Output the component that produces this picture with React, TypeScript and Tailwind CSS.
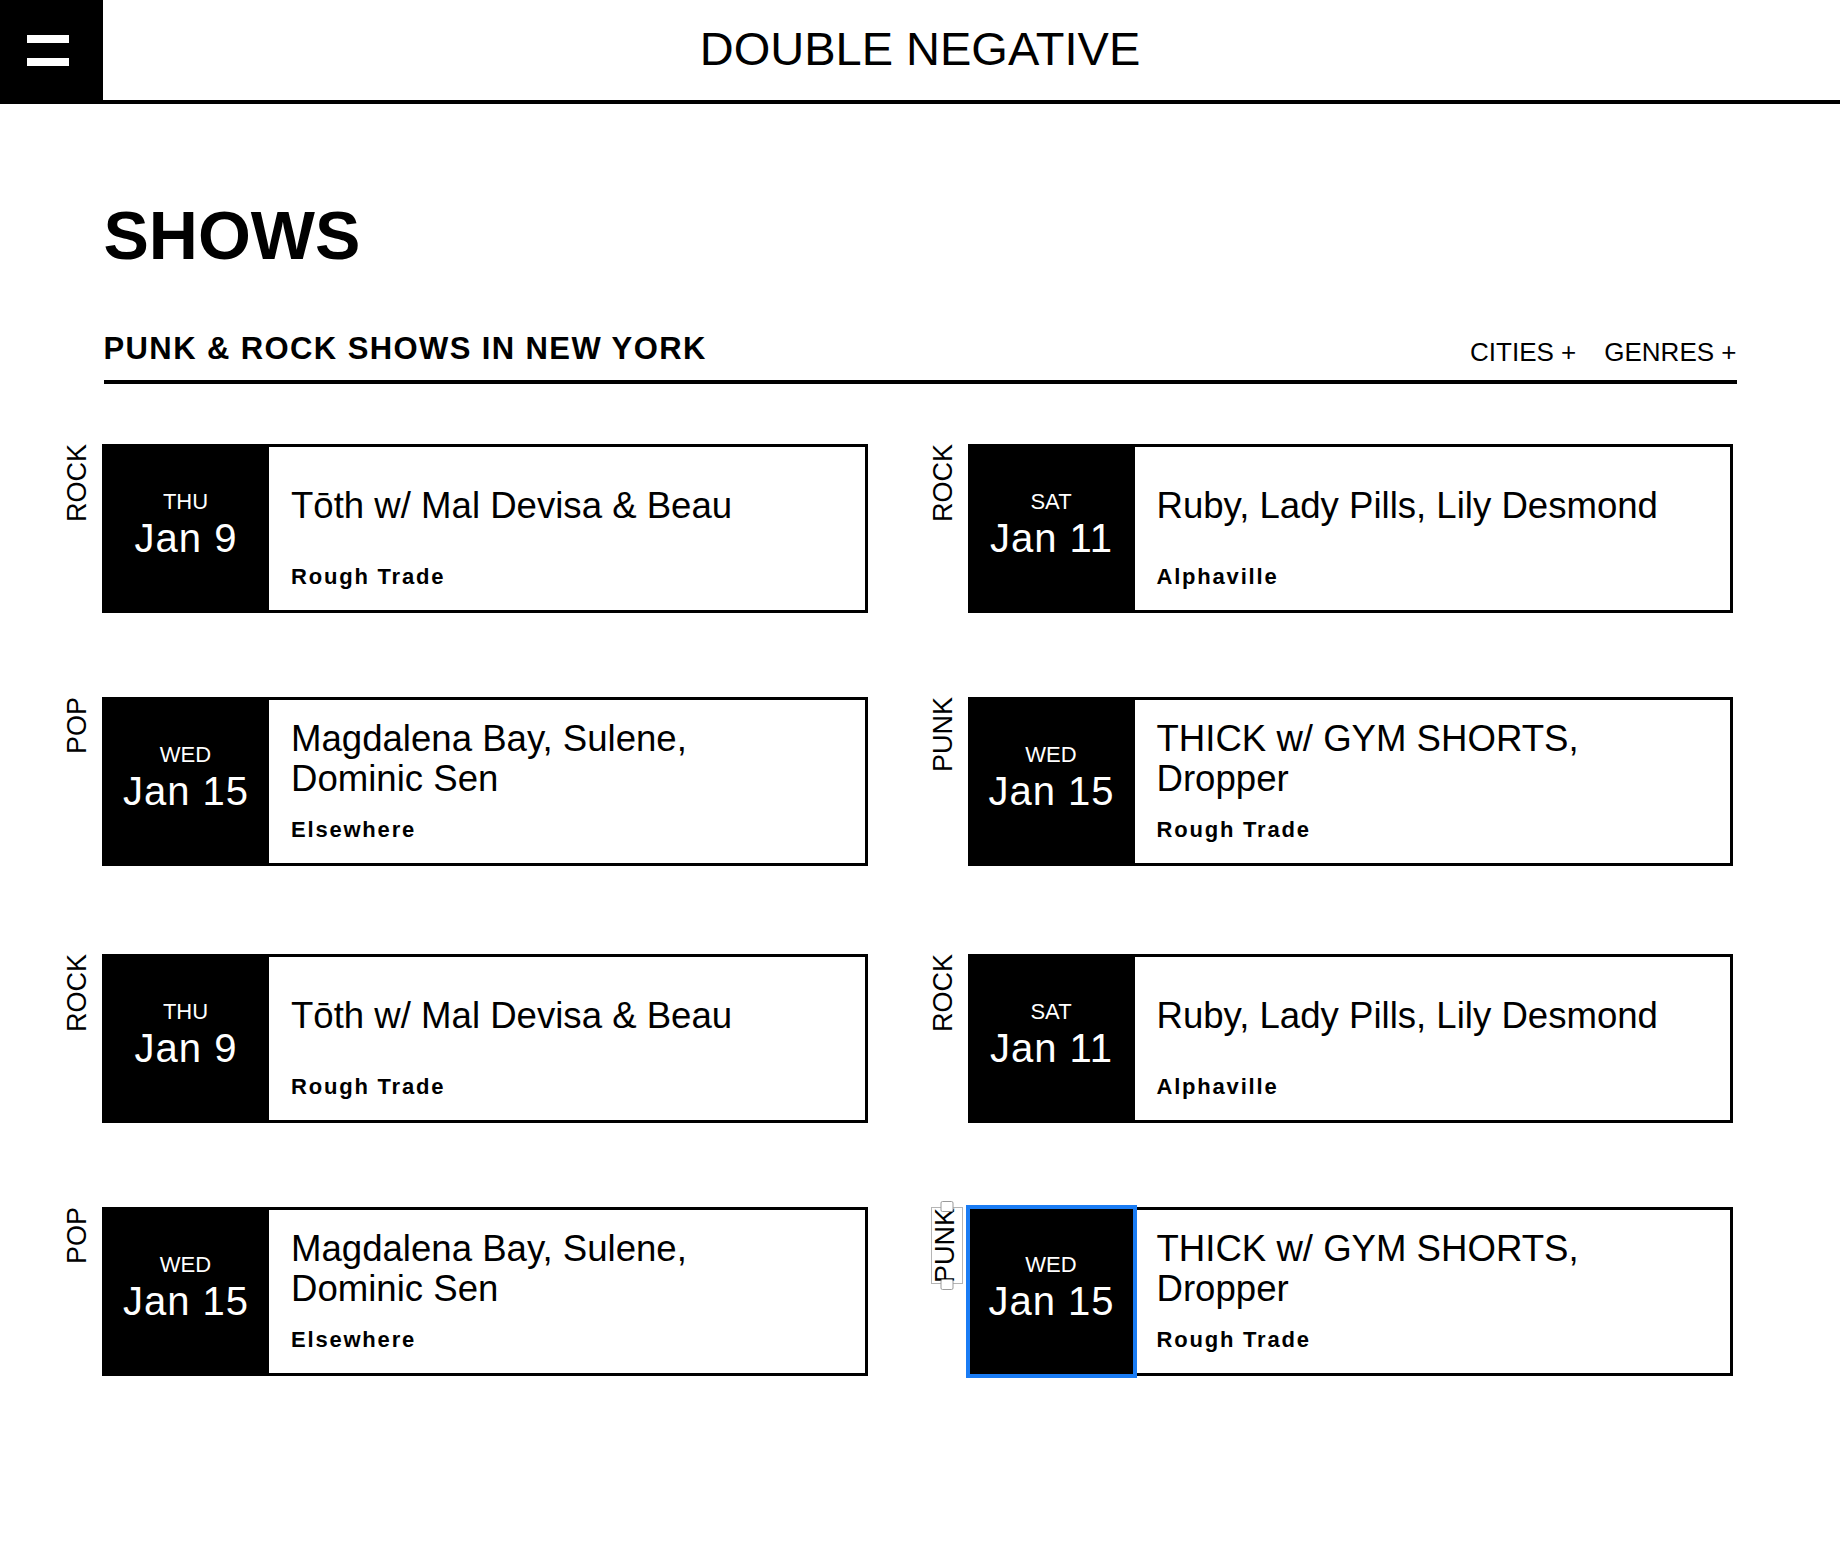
import React from "react";

type Show = { genre: string; day: string; date: string; title: string; venue: string };

const shows: Show[] = [
  { genre: "ROCK", day: "THU", date: "Jan 9", title: "Tōth w/ Mal Devisa & Beau", venue: "Rough Trade" },
  { genre: "ROCK", day: "SAT", date: "Jan 11", title: "Ruby, Lady Pills, Lily Desmond", venue: "Alphaville" },
  { genre: "POP", day: "WED", date: "Jan 15", title: "Magdalena Bay, Sulene, Dominic Sen", venue: "Elsewhere" },
  { genre: "PUNK", day: "WED", date: "Jan 15", title: "THICK w/ GYM SHORTS, Dropper", venue: "Rough Trade" },
];

function Card({ s, selected }: { s: Show; selected?: boolean }) {
  return (
    <div className="relative flex h-[169px]">
      {selected ? (
        <div className="absolute top-0 right-[calc(100%+5px)]">
          <div className="relative border border-[#b5b5b5] pr-[3px]">
            <div className="rotate-180 text-[27px] leading-[27px] [writing-mode:vertical-rl]">{s.genre}</div>
            <div className="absolute -top-[7px] left-1/2 h-[11px] w-[13px] -translate-x-1/2 rounded-[2px] border border-[#9a9a9a] bg-white" />
            <div className="absolute -bottom-[7px] left-1/2 h-[11px] w-[13px] -translate-x-1/2 rounded-[2px] border border-[#9a9a9a] bg-white" />
          </div>
        </div>
      ) : (
        <div className="absolute top-0 right-[calc(100%+11px)]">
          <div className="rotate-180 text-[27px] leading-[27px] [writing-mode:vertical-rl]">{s.genre}</div>
        </div>
      )}
      <div className="relative flex w-[167px] shrink-0 flex-col items-center justify-center bg-black pb-[9px] text-white">
        <div className="text-[22px] leading-[24px]">{s.day}</div>
        <div className="mt-[3px] pl-[1px] text-[40px] leading-[42px] tracking-[1px]">{s.date}</div>
        {selected && <div className="absolute -inset-[2px] border-4 border-[#1a7cf4]" />}
      </div>
      <div className="flex min-w-0 flex-1 flex-col border-[3px] border-l-0 border-black pb-[21px] pl-[22px]">
        <div className="flex flex-1 items-center">
          <div className="max-w-[520px] text-[36.6px] leading-[40px]">{s.title}</div>
        </div>
        <div className="text-[22px] font-bold leading-[24px] tracking-[1.8px]">{s.venue}</div>
      </div>
    </div>
  );
}

function Group({ last }: { last?: boolean }) {
  return (
    <div className="-ml-[1.5px] grid w-[1631px] grid-cols-2 gap-x-[100px] gap-y-[84px]">
      {shows.map((s, i) => (
        <Card key={i} s={s} selected={last && i === 3} />
      ))}
    </div>
  );
}

export default function App() {
  return (
    <div className="min-h-[1564px] w-full bg-white font-['Liberation_Sans',Arial,sans-serif] text-black">
      <header className="grid h-[104px] grid-cols-[103px_1fr_103px] border-b-4 border-black">
        <div className="flex h-[100px] flex-col items-center justify-center gap-[15px] bg-black pr-[7px]">
          <div className="h-[8px] w-[42px] bg-white" />
          <div className="h-[8px] w-[42px] bg-white" />
        </div>
        <div className="flex h-[100px] items-center justify-center pb-[3px]">
          <span className="text-[47px] leading-none">DOUBLE NEGATIVE</span>
        </div>
        <div />
      </header>

      <main className="mx-auto w-[1633px] pt-[98px] pb-[120px]">
        <h1 className="text-[68px] font-bold leading-[67px]">SHOWS</h1>

        <div className="mt-[64px] flex items-end justify-between border-b-4 border-black pb-[1px]">
          <h2 className="mb-[14px] text-[31px] font-bold leading-[32px] tracking-[1.4px]">
            PUNK &amp; ROCK SHOWS IN NEW YORK
          </h2>
          <div className="mb-[12px] flex gap-[28px] text-[26px] leading-[30px]">
            <span>CITIES +</span>
            <span>GENRES +</span>
          </div>
        </div>

        <div className="mt-[60px]">
          <Group />
        </div>
        <div className="mt-[88px]">
          <Group last />
        </div>
      </main>
    </div>
  );
}
